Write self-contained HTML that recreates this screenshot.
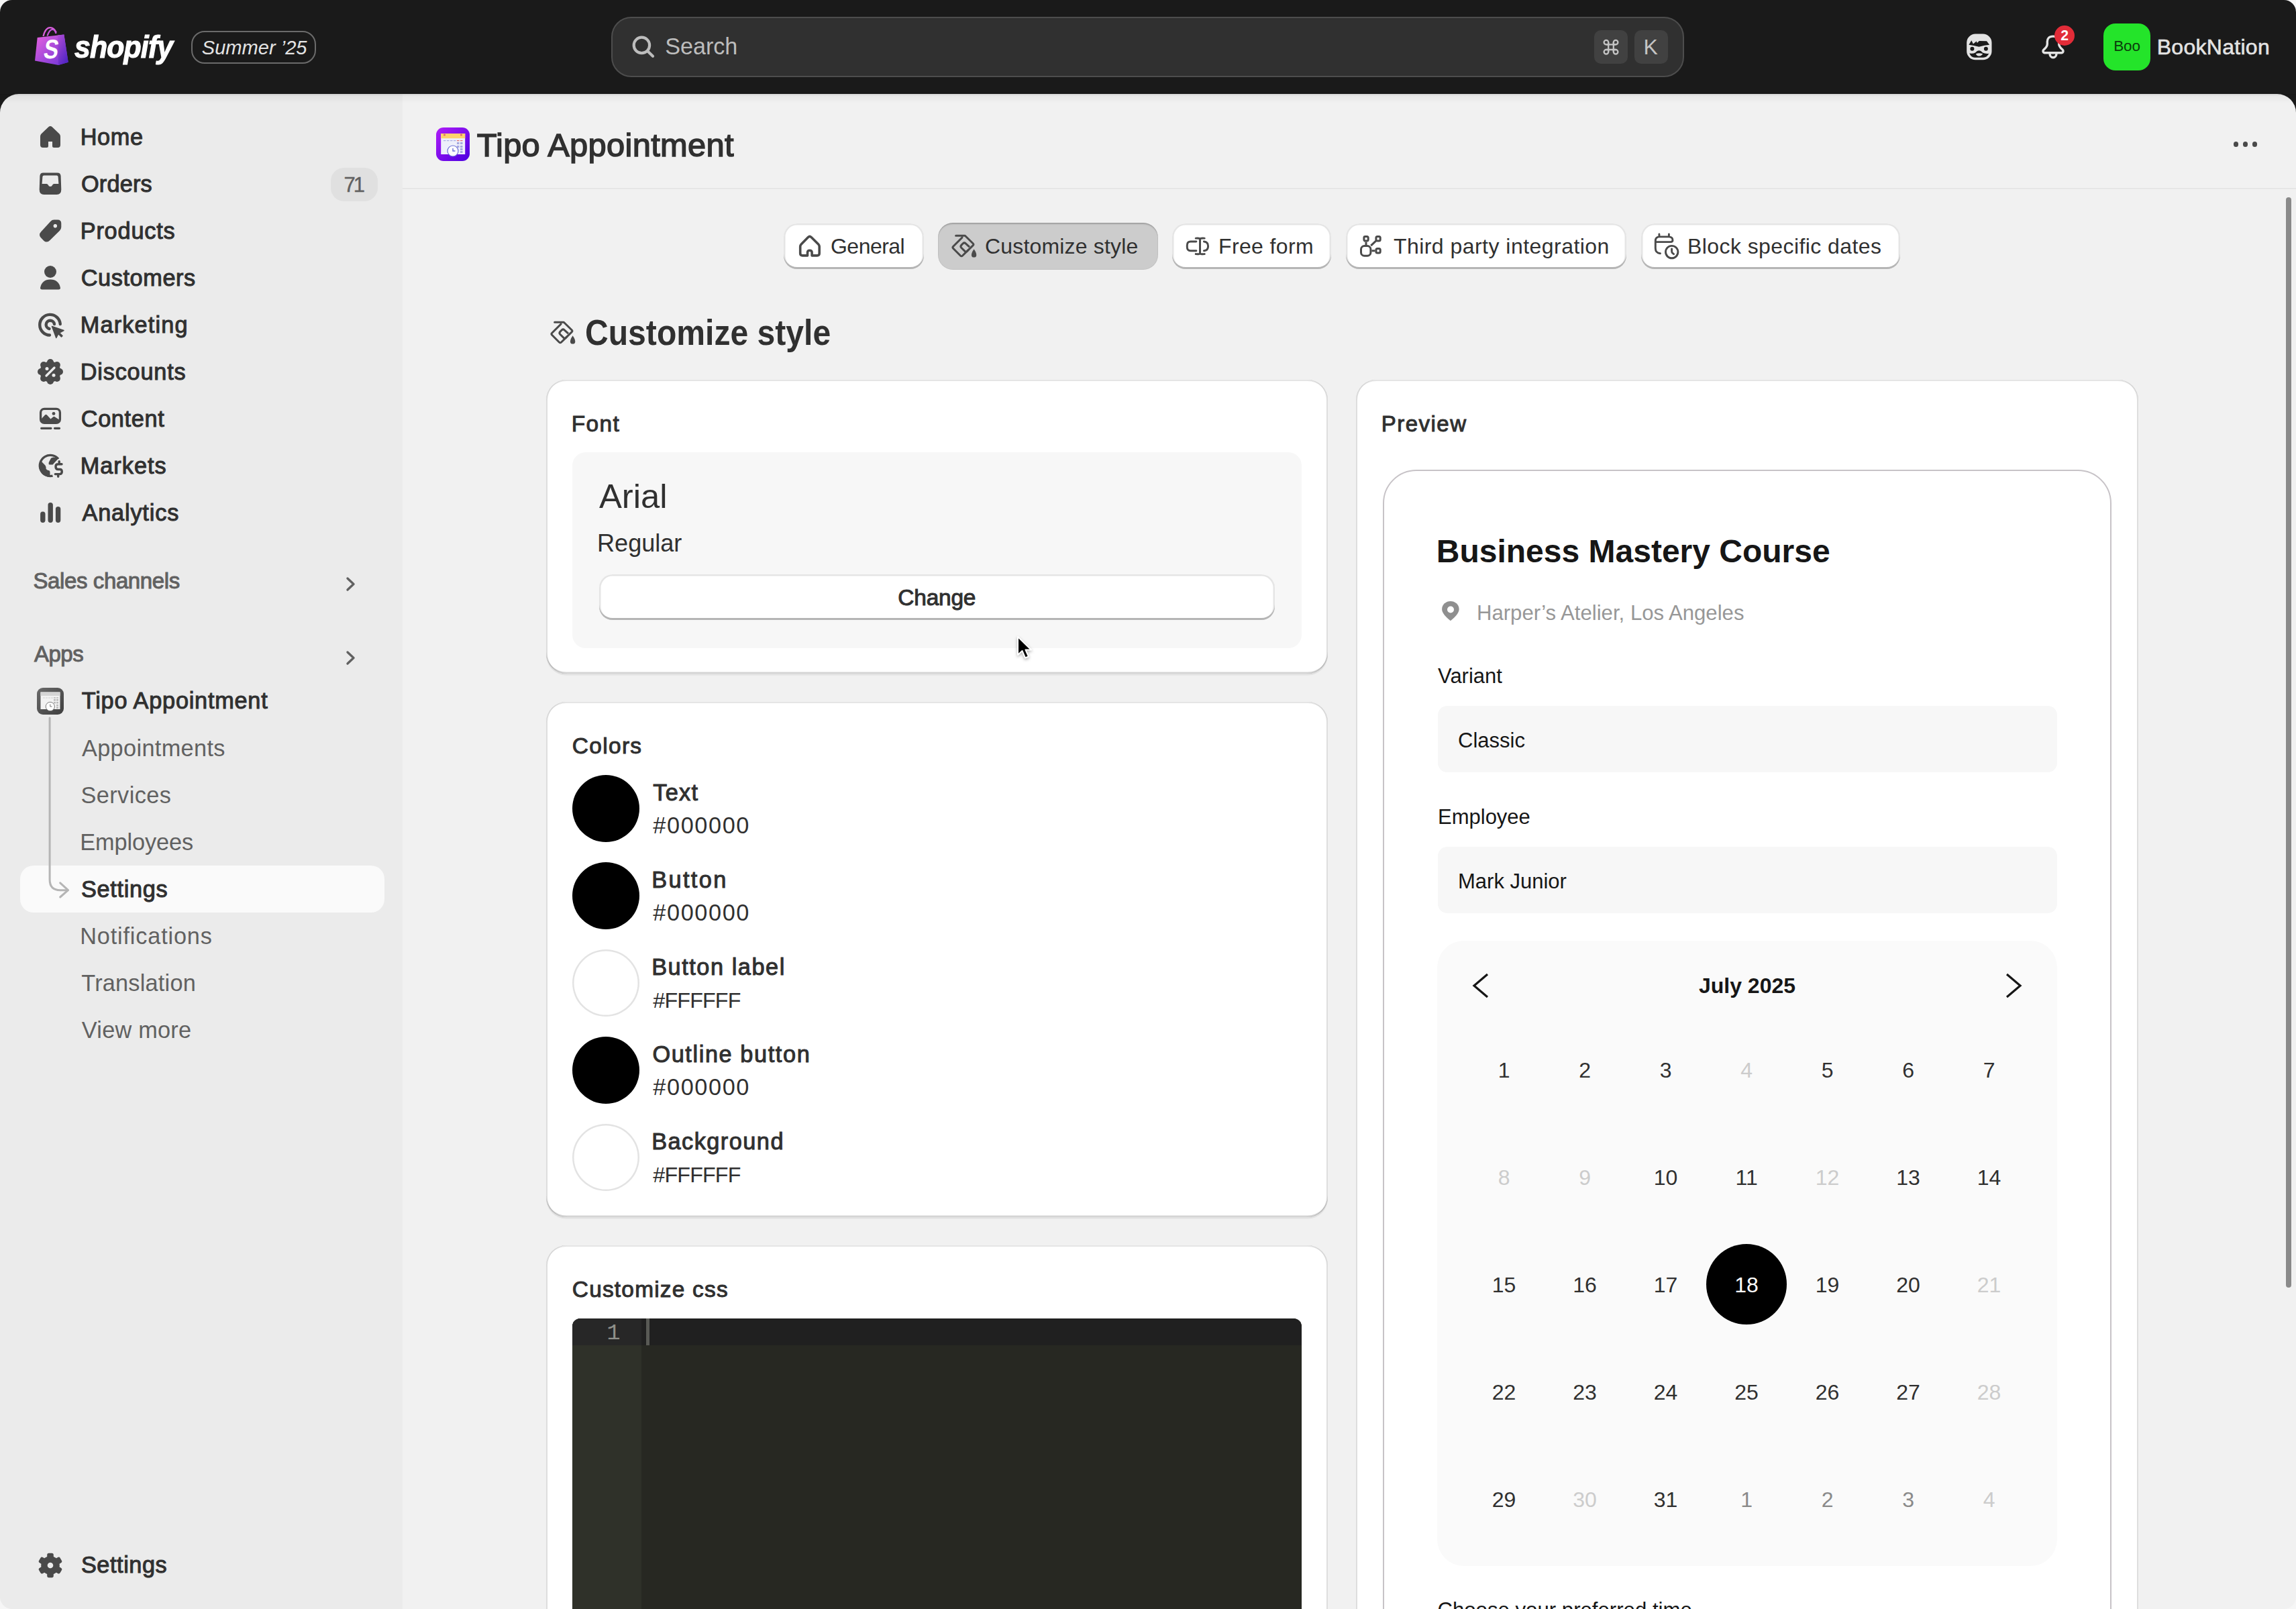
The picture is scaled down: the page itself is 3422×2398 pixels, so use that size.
<!DOCTYPE html>
<html><head><meta charset="utf-8">
<style>
*{box-sizing:border-box;margin:0;padding:0}
html,body{width:3422px;height:2398px;overflow:hidden;background:#f6f6f6}
body{font-family:"Liberation Sans",sans-serif;color:#303030;position:relative}
.abs{position:absolute}
#win{position:absolute;left:0;top:0;width:3422px;height:2398px;border-radius:18px;overflow:hidden;background:transparent}
#top{position:absolute;left:0;top:0;width:3422px;height:220px;background:#1a1a1a}
#side{position:absolute;left:0;top:140px;width:600px;height:2258px;background:#ebebeb;border-top-left-radius:28px}
#main{position:absolute;left:600px;top:140px;width:2822px;height:2258px;background:#f1f1f1;border-top-right-radius:28px}
.t{position:absolute;white-space:nowrap;line-height:1}
</style></head>
<body>
<div id="win">
<div id="top"></div>
<div id="side"></div>
<div id="main"></div>
<div style="position:absolute;left:0;top:140px;width:3422px;height:16px;background:linear-gradient(rgba(0,0,0,.12),rgba(0,0,0,.04) 3px,rgba(0,0,0,0) 14px)"></div>
<svg class="abs" style="left:48px;top:38px;" width="60" height="62" viewBox="0 0 60 62">
<defs><linearGradient id="bagg" x1="0" y1="0" x2="1" y2="1"><stop offset="0" stop-color="#e862df"/><stop offset="1" stop-color="#6a33d6"/></linearGradient>
<linearGradient id="bagr" x1="0" y1="0" x2="0.6" y2="1"><stop offset="0" stop-color="#b24ed6"/><stop offset="1" stop-color="#5526c4"/></linearGradient></defs>
<path d="M16.5 16 C18.5 8 22.5 3.2 26.8 3.2 C31 3.2 34 6.5 35.9 10.5" fill="none" stroke="#d75fd9" stroke-width="2.3"/>
<path d="M22.5 15.5 C24.5 9.5 27.5 5.8 30.3 5.8 C32.8 5.8 34.5 8.5 35.5 12" fill="none" stroke="#c455d8" stroke-width="2.2"/>
<path d="M7.7 18.1 L47.4 13.4 L53.7 54.7 L39 58.9 L4 52.6 Z" fill="url(#bagg)"/>
<path d="M38 14.6 L47.4 13.4 L53.7 54.7 L39 58.9 Z" fill="url(#bagr)"/>
<text x="0" y="0" font-family="Liberation Sans" font-weight="bold" font-size="40" fill="#fff" transform="translate(15.5 48.5) skewX(-9) scale(0.82 1)">S</text>
</svg>
<div class="t " style="left:111.49px;top:47.46px;font-size:46px;font-weight:700;color:#ffffff;font-style:italic;transform-origin:0 0;transform:scaleX(0.93);letter-spacing:-0.9px;-webkit-text-stroke:1.2px #fff;">shopify</div>
<div class="abs" style="left:285px;top:46px;width:186px;height:49px;border:2.5px solid #6b6b6b;border-radius:20px;"></div>
<div class="t " style="left:300.79px;top:56.78px;font-size:29.08px;font-weight:400;color:#e3e3e3;font-style:italic;">Summer ’25</div>
<div class="abs" style="left:911px;top:25px;width:1599px;height:90px;background:#303030;border:2px solid #4d4d4d;border-radius:30px;"></div>
<svg class="abs" style="left:930px;top:40px;" width="60" height="60" viewBox="0 0 60 60"><circle cx="26.4" cy="27.4" r="11.7" fill="none" stroke="#bdbdbd" stroke-width="4.2"/><path d="M35 36 L43 43.8" stroke="#bdbdbd" stroke-width="4.2" stroke-linecap="round"/></svg>
<div class="t " style="left:991.13px;top:51.98px;font-size:34.16px;font-weight:400;color:#bdbdbd;letter-spacing:-0.005px;">Search</div>
<div class="abs" style="left:2376px;top:45px;width:50px;height:50px;background:#414141;border-radius:10px;"></div>
<div class="abs" style="left:2436px;top:45px;width:50px;height:50px;background:#414141;border-radius:10px;"></div>
<svg class="abs" style="left:2388px;top:57px;" width="26" height="26" viewBox="0 0 26 26"><g fill="none" stroke="#c4c4c4" stroke-width="2.3"><path d="M9.2 6.1 L9.2 20.3 M16.8 6.1 L16.8 20.3 M5.9 9.4 L20.1 9.4 M5.9 17 L20.1 17"/><path d="M9.2 9.4 L9.2 6.1 A3.3 3.3 0 1 0 5.9 9.4 Z M16.8 9.4 L16.8 6.1 A3.3 3.3 0 1 1 20.1 9.4 Z M9.2 17 L9.2 20.3 A3.3 3.3 0 1 1 5.9 17 Z M16.8 17 L16.8 20.3 A3.3 3.3 0 1 0 20.1 17 Z"/></g></svg>
<div class="t " style="left:2449.38px;top:54.23px;font-size:31.98px;font-weight:400;color:#c4c4c4;letter-spacing:-0.825px;">K</div>
<svg class="abs" style="left:2920px;top:40px;" width="60" height="60" viewBox="0 0 60 60">
<rect x="11.2" y="10.6" width="37.3" height="38.6" rx="13" fill="#e3e3e3"/>
<path d="M14.4 26.7 L18.3 20.3 L20.9 25.4 L25.7 21.4 L26.8 23.9 L29.8 20.9 L41 21.3 L45.1 26.7 Q38 27 29.5 29.8 Q22 27.5 14.4 26.7 Z" fill="#1a1a1a"/>
<circle cx="19.4" cy="32.8" r="3" fill="#1a1a1a"/><circle cx="39.9" cy="32.8" r="3" fill="#1a1a1a"/>
<path d="M15.3 39.2 Q20 40.5 24 38.5 Q27 35.3 29.6 35.3 Q32.2 35.3 35 38.5 Q39 40.5 44.3 39.8 Q41.5 45.6 36 45.8 L23 45.8 Q17.5 45.5 15.3 39.2 Z" fill="#1a1a1a"/>
<path d="M24.8 40.2 Q29.6 38.5 35.2 40.2 Q33 43.6 29.6 43.6 Q26.3 43.6 24.8 40.2 Z" fill="#e3e3e3"/>
</svg>
<svg class="abs" style="left:3035px;top:44px;" width="50" height="50" viewBox="0 0 50 50">
<path d="M25 10.1 C19 10.1 16.3 13.5 16.3 18 L16.3 21.5 C16.3 25.5 14 27.5 11 30 C9.5 31.2 9.6 34.3 12.2 34.7 L37.8 34.7 C40.4 34.3 40.5 31.2 39 30 C36 27.5 33.7 25.5 33.7 21.5 L33.7 18 C33.7 13.5 31 10.1 25 10.1 Z" fill="none" stroke="#e3e3e3" stroke-width="3.4" stroke-linejoin="round"/>
<path d="M20 35.5 C20 39.5 22.5 41.8 25 41.8 C27.5 41.8 30 39.5 30 35.5" fill="none" stroke="#e3e3e3" stroke-width="3.4"/>
</svg>
<div class="abs" style="left:3062px;top:38px;width:30px;height:30px;background:#e22c38;border-radius:50%;"></div>
<div class="t " style="left:3071.26px;top:42.04px;font-size:21.21px;font-weight:700;color:#ffffff;">2</div>
<div class="abs" style="left:3135px;top:35px;width:70px;height:70px;background:#24e42a;border-radius:18px;"></div>
<div class="t " style="left:3150.15px;top:57.93px;font-size:22.53px;font-weight:400;color:#0b3d0c;letter-spacing:-0.144px;">Boo</div>
<div class="t " style="left:3214.68px;top:54.03px;font-size:31.98px;font-weight:400;color:#e3e3e3;letter-spacing:0.307px;-webkit-text-stroke:0.60px #e3e3e3;">BookNation</div>
<svg class="abs" style="left:50px;top:179px;" width="50" height="50" viewBox="0 0 50 50"><path d="M25 9 Q23.6 9 22.5 10 L11.5 20.5 Q10 22 10 24.5 L10 37 Q10 41 14 41 L19.5 41 Q22 41 22 38.5 L22 32 L28 32 L28 38.5 Q28 41 30.5 41 L36 41 Q40 41 40 37 L40 24.5 Q40 22 38.5 20.5 L27.5 10 Q26.4 9 25 9 Z" fill="#4a4a4a"/></svg>
<div class="t " style="left:119.71px;top:187.46px;font-size:34.3px;font-weight:400;color:#303030;letter-spacing:0.601px;-webkit-text-stroke:1.04px #303030;">Home</div>
<svg class="abs" style="left:50px;top:249px;" width="50" height="50" viewBox="0 0 50 50"><path fill-rule="evenodd" d="M14.5 8.6 L35.5 8.6 Q40 8.6 40.6 13 L41.3 33.5 Q41.3 41 34.5 41 L15.5 41 Q8.7 41 8.7 33.5 L9.4 13 Q10 8.6 14.5 8.6 Z M15.5 12.6 L34.5 12.6 Q36.4 12.6 36.6 14.5 L37.4 25 L30.5 25 Q29 25 28.3 26.5 Q27.3 29 25 29 Q22.7 29 21.7 26.5 Q21 25 19.5 25 L12.6 25 L13.4 14.5 Q13.6 12.6 15.5 12.6 Z" fill="#4a4a4a"/></svg>
<div class="t " style="left:120.91px;top:257.46px;font-size:34.3px;font-weight:400;color:#303030;letter-spacing:0.197px;-webkit-text-stroke:1.04px #303030;">Orders</div>
<svg class="abs" style="left:50px;top:319px;" width="50" height="50" viewBox="0 0 50 50"><path fill-rule="evenodd" d="M30.5 8.6 L35.8 8.6 Q41.3 8.6 41.3 14.1 L41.3 19.5 Q41.3 22.5 39 24.7 L24.5 39 Q22 41.6 19.5 41.6 Q17.2 41.6 15.5 39.9 L10.7 35 Q9 33.3 9 31 Q9 28.5 11.5 26 L25.3 11 Q27.6 8.6 30.5 8.6 Z M32.3 15.2 A2.6 2.6 0 1 0 32.31 15.2 Z" fill="#4a4a4a"/><circle cx="32.3" cy="17.7" r="2.6" fill="#ebebeb"/></svg>
<div class="t " style="left:119.71px;top:327.46px;font-size:34.3px;font-weight:400;color:#303030;letter-spacing:0.809px;-webkit-text-stroke:1.04px #303030;">Products</div>
<svg class="abs" style="left:50px;top:389px;" width="50" height="50" viewBox="0 0 50 50"><circle cx="25" cy="16" r="9" fill="#4a4a4a"/><path d="M10 40 Q10 42.5 12.8 42.5 L37.2 42.5 Q40 42.5 40 40 Q37.5 27.4 25 27.4 Q12.5 27.4 10 40 Z" fill="#4a4a4a"/></svg>
<div class="t " style="left:120.77px;top:397.46px;font-size:34.3px;font-weight:400;color:#303030;letter-spacing:0.576px;-webkit-text-stroke:1.04px #303030;">Customers</div>
<svg class="abs" style="left:50px;top:459px;" width="50" height="50" viewBox="0 0 50 50"><path d="M24 40.5 A15.3 15.3 0 1 1 39.8 24" fill="none" stroke="#4a4a4a" stroke-width="4.4" stroke-linecap="round"/><path d="M23.5 31 A6.2 6.2 0 1 1 31 24" fill="none" stroke="#4a4a4a" stroke-width="4.4" stroke-linecap="round"/><path d="M27.5 27.5 L45 33.5 L38.5 37 L43 41.5 L41.5 43 L37 38.5 L33.8 44.5 Z" fill="#4a4a4a" stroke="#4a4a4a" stroke-width="1.5" stroke-linejoin="round"/></svg>
<div class="t " style="left:119.71px;top:467.46px;font-size:34.3px;font-weight:400;color:#303030;letter-spacing:1.170px;-webkit-text-stroke:1.04px #303030;">Marketing</div>
<svg class="abs" style="left:50px;top:529px;" width="50" height="50" viewBox="0 0 50 50"><circle cx="25" cy="25" r="15.5" fill="#4a4a4a"/><circle cx="25.00" cy="11.00" r="5" fill="#4a4a4a"/><circle cx="34.90" cy="15.10" r="5" fill="#4a4a4a"/><circle cx="39.00" cy="25.00" r="5" fill="#4a4a4a"/><circle cx="34.90" cy="34.90" r="5" fill="#4a4a4a"/><circle cx="25.00" cy="39.00" r="5" fill="#4a4a4a"/><circle cx="15.10" cy="34.90" r="5" fill="#4a4a4a"/><circle cx="11.00" cy="25.00" r="5" fill="#4a4a4a"/><circle cx="15.10" cy="15.10" r="5" fill="#4a4a4a"/><path d="M19 31 L31 19" stroke="#ebebeb" stroke-width="3.3" stroke-linecap="round"/><circle cx="20" cy="20.4" r="2.5" fill="#ebebeb"/><circle cx="30" cy="30.2" r="2.5" fill="#ebebeb"/></svg>
<div class="t " style="left:119.71px;top:537.46px;font-size:34.3px;font-weight:400;color:#303030;letter-spacing:0.800px;-webkit-text-stroke:1.04px #303030;">Discounts</div>
<svg class="abs" style="left:50px;top:599px;" width="50" height="50" viewBox="0 0 50 50"><rect x="10.6" y="10.4" width="28.8" height="21" rx="5.5" fill="none" stroke="#4a4a4a" stroke-width="3.3"/><path d="M11 28 L11 26 L17 19.5 Q18.5 18 20 19.5 L25.5 25.5 L29 22.5 Q30.5 21 32 22.5 L39 27 L39 28 Q39 31 36 31 L14 31 Q11 31 11 28 Z" fill="#4a4a4a"/><circle cx="30" cy="17.4" r="2.4" fill="#4a4a4a"/><path d="M11.7 39.3 L26 39.3 M31.5 39.3 L38.5 39.3" stroke="#4a4a4a" stroke-width="3.3" stroke-linecap="round"/></svg>
<div class="t " style="left:120.77px;top:607.46px;font-size:34.3px;font-weight:400;color:#303030;letter-spacing:0.633px;-webkit-text-stroke:1.04px #303030;">Content</div>
<svg class="abs" style="left:50px;top:669px;" width="50" height="50" viewBox="0 0 50 50"><path d="M28.5 40.2 A15.6 15.6 0 1 1 36.95 14.97" fill="none" stroke="#4a4a4a" stroke-width="3.4"/><path d="M12 19 L17.4 24.5 Q18.6 26 18.6 29.5 Q19.5 31.8 23.3 32.3 Q24.5 33 24.5 35 L24.5 38.8 L28.8 41.5 A17 17 0 0 1 8.5 21 Z" fill="#4a4a4a"/><path d="M22.7 20.2 L26.1 13.7 L29.5 12.4 L37.9 14 L33.6 18 L28.6 23.6 L23.9 23.6 Q22 23 22.7 20.2 Z" fill="#4a4a4a"/><path d="M42 22.7 L36.7 22.7 Q33 22.7 33 26.4 Q33 30.5 36.7 30.5 L39.2 30.5 Q42.3 30.5 42.3 34 Q42.3 37.6 38.5 37.6 L32.3 37.6 M38.2 18.6 L38.2 22.7 M36.7 41.3 L36.7 37.6" fill="none" stroke="#ebebeb" stroke-width="7" stroke-linecap="round" stroke-linejoin="round"/><path d="M42 22.7 L36.7 22.7 Q33 22.7 33 26.4 Q33 30.5 36.7 30.5 L39.2 30.5 Q42.3 30.5 42.3 34 Q42.3 37.6 38.5 37.6 L32.3 37.6 M38.2 18.6 L38.2 22.7 M36.7 41.3 L36.7 37.6" fill="none" stroke="#4a4a4a" stroke-width="3.4" stroke-linecap="round" stroke-linejoin="round"/></svg>
<div class="t " style="left:119.71px;top:677.46px;font-size:34.3px;font-weight:400;color:#303030;letter-spacing:1.006px;-webkit-text-stroke:1.04px #303030;">Markets</div>
<svg class="abs" style="left:50px;top:739px;" width="50" height="50" viewBox="0 0 50 50"><path d="M13.8 27.3 L13.8 36.3 M25.2 13.6 L25.2 36.3 M36.6 19.6 L36.6 36.3" stroke="#4a4a4a" stroke-width="7.4" stroke-linecap="round"/></svg>
<div class="t " style="left:122.45px;top:747.46px;font-size:34.3px;font-weight:400;color:#303030;letter-spacing:0.829px;-webkit-text-stroke:1.04px #303030;">Analytics</div>
<div class="abs" style="left:493px;top:250px;width:70px;height:50px;background:#e0e0e0;border-radius:20px;"></div>
<div class="t " style="left:512.62px;top:259.76px;font-size:31px;font-weight:400;color:#616161;letter-spacing:-3px;-webkit-text-stroke:0.4px #616161;">71</div>
<div class="t " style="left:49.48px;top:848.77px;font-size:32.99px;font-weight:400;color:#616161;letter-spacing:-0.387px;-webkit-text-stroke:1.00px #616161;">Sales channels</div>
<div class="t " style="left:50.93px;top:958.07px;font-size:32.99px;font-weight:400;color:#616161;letter-spacing:-0.477px;-webkit-text-stroke:1.00px #616161;">Apps</div>
<svg class="abs" style="left:508px;top:850px;" width="30" height="40" viewBox="0 0 30 40"><path d="M10 12 L19 20.5 L10 29" fill="none" stroke="#616161" stroke-width="3.4" stroke-linecap="round" stroke-linejoin="round"/></svg>
<svg class="abs" style="left:508px;top:960px;" width="30" height="40" viewBox="0 0 30 40"><path d="M10 12 L19 20.5 L10 29" fill="none" stroke="#616161" stroke-width="3.4" stroke-linecap="round" stroke-linejoin="round"/></svg>
<svg class="abs" style="left:55px;top:1025px;" width="40" height="40" viewBox="0 0 40 40"><defs><linearGradient id="gg" x1="0" y1="0" x2="1" y2="1"><stop offset="0" stop-color="#6a6a6a"/><stop offset="1" stop-color="#3e3e3e"/></linearGradient></defs>
<rect x="0" y="0" width="40" height="40" rx="9" fill="url(#gg)"/>
<rect x="5.5" y="6.5" width="29" height="25.5" fill="#f2f2f2"/><rect x="5.5" y="6.5" width="29" height="5.5" fill="#d5d5d5"/>
<g fill="#cfcfcf"><rect x="9" y="14.5" width="3" height="1"/><rect x="13" y="14.5" width="3" height="1"/><rect x="17" y="14.5" width="3" height="1"/><rect x="21" y="14.5" width="3" height="1"/><rect x="25" y="14.5" width="3" height="1" fill="#999"/><rect x="29" y="14.5" width="3" height="1" fill="#999"/>
<rect x="25" y="17" width="3" height="2.5" fill="#bbb"/><rect x="29" y="17" width="3" height="2.5" fill="#bbb"/><rect x="25" y="21" width="3" height="2.5" fill="#bbb"/><rect x="29" y="21" width="3" height="2.5" fill="#bbb"/><rect x="29" y="25" width="3" height="2.5" fill="#bbb"/><rect x="29" y="28.5" width="3" height="2.5" fill="#bbb"/></g>
<circle cx="19.8" cy="28" r="6.6" fill="#fff" stroke="#5a5a5a" stroke-width="0.8"/><path d="M19.8 24.5 L19.8 28 L22.5 28" stroke="#777" stroke-width="1" fill="none"/>
</svg>
<div class="t " style="left:121.77px;top:1026.96px;font-size:34.3px;font-weight:400;color:#303030;letter-spacing:0.751px;-webkit-text-stroke:1.04px #303030;">Tipo Appointment</div>
<div class="abs" style="left:30px;top:1290px;width:543px;height:70px;background:#fafafa;border-radius:20px;"></div>
<svg class="abs" style="left:60px;top:1060px;" width="50" height="290" viewBox="0 0 50 290"><path d="M14.1 10 L14.1 251 Q14.1 266.7 29.8 266.7 L41 266.7" fill="none" stroke="#b5b5b5" stroke-width="3" stroke-linecap="round"/><path d="M29.7 255.8 L41.5 266.7 L29.7 277" fill="none" stroke="#b5b5b5" stroke-width="3" stroke-linecap="round" stroke-linejoin="round"/></svg>
<div class="t " style="left:121.93px;top:1097.96px;font-size:34.3px;font-weight:400;color:#616161;letter-spacing:0.351px;">Appointments</div>
<div class="t " style="left:120.42px;top:1167.96px;font-size:34.3px;font-weight:400;color:#616161;letter-spacing:0.425px;">Services</div>
<div class="t " style="left:119.19px;top:1237.96px;font-size:34.3px;font-weight:400;color:#616161;letter-spacing:-0.079px;">Employees</div>
<div class="t " style="left:120.94px;top:1307.96px;font-size:34.3px;font-weight:400;color:#303030;letter-spacing:0.692px;-webkit-text-stroke:1.04px #303030;">Settings</div>
<div class="t " style="left:119.19px;top:1377.96px;font-size:34.3px;font-weight:400;color:#616161;letter-spacing:0.826px;">Notifications</div>
<div class="t " style="left:121.25px;top:1447.96px;font-size:34.3px;font-weight:400;color:#616161;letter-spacing:0.217px;">Translation</div>
<div class="t " style="left:121.83px;top:1517.96px;font-size:34.3px;font-weight:400;color:#616161;letter-spacing:0.225px;">View more</div>
<svg class="abs" style="left:50px;top:2308px;" width="50" height="50" viewBox="0 0 50 50"><circle cx="25" cy="25" r="13.8" fill="#4a4a4a"/><rect x="20.2" y="6.8" width="9.6" height="12" rx="2.6" fill="#4a4a4a" transform="rotate(0 25 25)"/><rect x="20.2" y="6.8" width="9.6" height="12" rx="2.6" fill="#4a4a4a" transform="rotate(60 25 25)"/><rect x="20.2" y="6.8" width="9.6" height="12" rx="2.6" fill="#4a4a4a" transform="rotate(120 25 25)"/><rect x="20.2" y="6.8" width="9.6" height="12" rx="2.6" fill="#4a4a4a" transform="rotate(180 25 25)"/><rect x="20.2" y="6.8" width="9.6" height="12" rx="2.6" fill="#4a4a4a" transform="rotate(240 25 25)"/><rect x="20.2" y="6.8" width="9.6" height="12" rx="2.6" fill="#4a4a4a" transform="rotate(300 25 25)"/><circle cx="25" cy="25" r="4.3" fill="#ebebeb"/></svg>
<div class="t " style="left:120.94px;top:2314.96px;font-size:34.3px;font-weight:400;color:#303030;letter-spacing:0.550px;-webkit-text-stroke:1.04px #303030;">Settings</div>
<svg class="abs" style="left:650px;top:190px;" width="50" height="50" viewBox="0 0 50 50"><defs><linearGradient id="pg" x1="0" y1="0" x2="1" y2="1"><stop offset="0" stop-color="#b01cf8"/><stop offset="1" stop-color="#4a00df"/></linearGradient></defs>
<rect x="0" y="0" width="50" height="50" rx="11" fill="url(#pg)"/>
<rect x="7.2" y="9" width="36" height="31" fill="#eef0fb"/><rect x="7.2" y="9" width="36" height="7.2" fill="#fdd36d"/>
<g fill="#a9aee6"><rect x="11" y="19" width="3.5" height="1.2"/><rect x="16" y="19" width="3.5" height="1.2"/><rect x="21" y="19" width="3.5" height="1.2"/><rect x="26" y="19" width="3.5" height="1.2"/></g>
<g fill="#e06a6a"><rect x="31" y="19" width="3.5" height="1.2"/><rect x="36" y="19" width="3.5" height="1.2"/></g>
<g fill="#a5a8e0"><rect x="31" y="22" width="3.5" height="3"/><rect x="36" y="22" width="3.5" height="3"/><rect x="31" y="27" width="3.5" height="3"/><rect x="36" y="27" width="3.5" height="3"/><rect x="36" y="31" width="3.5" height="3"/><rect x="36" y="35" width="3.5" height="3"/></g>
<circle cx="25" cy="35" r="8" fill="#fff" stroke="#6a6fd6" stroke-width="1.2"/><path d="M25 31 L25 35 L28.5 35" stroke="#6a6fd6" stroke-width="1.4" fill="none"/>
<circle cx="12.5" cy="11" r="1.6" fill="#e06a6a"/><circle cx="37.5" cy="11" r="1.6" fill="#e06a6a"/>
</svg>
<div class="t " style="left:710.67px;top:191.65px;font-size:48.84px;font-weight:400;color:#303030;letter-spacing:0.308px;-webkit-text-stroke:1.48px #303030;">Tipo Appointment</div>
<div class="abs" style="left:3328.9px;top:211.4px;width:7.2px;height:7.2px;background:#4a4a4a;border-radius:50%;"></div>
<div class="abs" style="left:3342.9px;top:211.4px;width:7.2px;height:7.2px;background:#4a4a4a;border-radius:50%;"></div>
<div class="abs" style="left:3356.9px;top:211.4px;width:7.2px;height:7.2px;background:#4a4a4a;border-radius:50%;"></div>
<div class="abs" style="left:600px;top:280px;width:2822px;height:2px;background:#e6e6e6;"></div>
<div class="abs" style="left:1168px;top:333px;width:209px;height:68px;background:#ffffff;border-radius:20px;box-shadow:inset 0 -3px 0 0 #b5b5b5, inset 0 0 0 2.5px rgba(0,0,0,.1), inset 0 1.5px 0 2.5px #fff;"></div>
<svg class="abs" style="left:1182px;top:342px;" width="50" height="50" viewBox="0 0 50 50"><path d="M21.5 38.9 L14 38.9 Q10.7 38.9 10.7 35.6 L10.7 25.5 Q10.7 23.5 12.2 22 L22.5 11.5 Q24.8 9.4 27.1 11.5 L37.7 22 Q39.2 23.5 39.2 25.5 L39.2 35.6 Q39.2 38.9 36 38.9 L28.1 38.9 L28.1 34.5 Q28.1 31.3 24.8 31.3 Q21.5 31.3 21.5 34.5 Z" fill="none" stroke="#4a4a4a" stroke-width="3.6" stroke-linejoin="round"/></svg>
<div class="t " style="left:1238.00px;top:351.33px;font-size:31.98px;font-weight:400;color:#303030;letter-spacing:-0.502px;">General</div>
<div class="abs" style="left:1398px;top:332px;width:328px;height:70px;background:#cccccc;border-radius:22px;box-shadow:inset 0 3px 2px -1px rgba(0,0,0,.2), inset 0 0 0 1px rgba(0,0,0,.05);"></div>
<svg class="abs" style="left:1410px;top:342px;" width="50" height="50" viewBox="0 0 50 50"><path d="M14.6 9.2 L28.3 9.2 L40.3 21 Q41.5 22.3 40.3 23.6 L24.6 39 Q23 40.5 21.4 39 L10.7 28.2 Q9.2 26.7 10.7 25.2 L24 12" fill="none" stroke="#4a4a4a" stroke-width="3" stroke-linecap="round" stroke-linejoin="round"/><path d="M35 26.2 L29.2 20.8 Q27.2 19 25.3 20.8 L22.8 23.4 Q21 25.3 22.8 27.2 L28.3 32.6 Q29.7 34 31.1 32.6 L33.4 30.3" fill="none" stroke="#4a4a4a" stroke-width="3" stroke-linejoin="round"/><path d="M41.6 29.2 Q45.3 34.5 45.3 37.9 A3.7 3.7 0 0 1 37.9 37.9 Q37.9 34.5 41.6 29.2 Z" fill="#4a4a4a"/></svg>
<div class="t " style="left:1467.97px;top:351.33px;font-size:31.98px;font-weight:400;color:#303030;letter-spacing:0.197px;">Customize style</div>
<div class="abs" style="left:1747px;top:333px;width:237px;height:68px;background:#ffffff;border-radius:20px;box-shadow:inset 0 -3px 0 0 #b5b5b5, inset 0 0 0 2.5px rgba(0,0,0,.1), inset 0 1.5px 0 2.5px #fff;"></div>
<svg class="abs" style="left:1759px;top:342px;" width="50" height="50" viewBox="0 0 50 50"><path d="M23.9 18 L15.5 18 Q10.3 18 10.3 23.5 L10.3 26.2 Q10.3 31.7 15.5 31.7 L23.9 31.7 M35.4 18 Q41.6 18.5 41.6 24.9 Q41.6 31.2 35.4 31.7 M29.5 13.5 L29.5 36.2 M23.2 13.1 Q29.5 12.6 29.5 14.5 Q29.5 12.6 36.2 13.1 M23.2 36.6 Q29.5 37.2 29.5 35.3 Q29.5 37.2 36.2 36.6" fill="none" stroke="#4a4a4a" stroke-width="2.95" stroke-linecap="round"/></svg>
<div class="t " style="left:1815.98px;top:351.33px;font-size:31.98px;font-weight:400;color:#303030;letter-spacing:0.391px;">Free form</div>
<div class="abs" style="left:2006px;top:333px;width:418px;height:68px;background:#ffffff;border-radius:20px;box-shadow:inset 0 -3px 0 0 #b5b5b5, inset 0 0 0 2.5px rgba(0,0,0,.1), inset 0 1.5px 0 2.5px #fff;"></div>
<svg class="abs" style="left:2018px;top:342px;" width="50" height="50" viewBox="0 0 50 50"><g fill="none" stroke="#4a4a4a" stroke-width="3"><rect x="14.9" y="10.5" width="6.3" height="6.6" rx="2"/><rect x="32.9" y="10.5" width="6.3" height="6.6" rx="2"/><rect x="32.9" y="28.5" width="6.3" height="6.6" rx="2"/><rect x="10.5" y="24.5" width="14.4" height="14.7" rx="5"/><path d="M18 18.6 L18 23 M25.2 24.2 L32.6 17.1 M26.4 31.7 L31.4 31.7"/></g></svg>
<div class="t " style="left:2076.90px;top:351.33px;font-size:31.98px;font-weight:400;color:#303030;letter-spacing:0.478px;">Third party integration</div>
<div class="abs" style="left:2446px;top:333px;width:386px;height:68px;background:#ffffff;border-radius:20px;box-shadow:inset 0 -3px 0 0 #b5b5b5, inset 0 0 0 2.5px rgba(0,0,0,.1), inset 0 1.5px 0 2.5px #fff;"></div>
<svg class="abs" style="left:2458px;top:342px;" width="50" height="50" viewBox="0 0 50 50"><path d="M16.5 35.7 Q9.3 35 9.3 28 L9.3 17 Q9.3 10.9 15.5 10.9 L29 10.9 Q35 10.9 35 16 Q35 18.6 32 18.6 L9.3 18.6 M14.9 7 L14.9 10.5 M29.4 7 L29.4 10.5" fill="none" stroke="#4a4a4a" stroke-width="2.9" stroke-linecap="round"/><circle cx="33.7" cy="33.6" r="9.2" fill="none" stroke="#4a4a4a" stroke-width="2.9"/><path d="M33.6 29 L33.6 32.4 Q33.6 34.2 35 35.4 L36.6 36.6" fill="none" stroke="#4a4a4a" stroke-width="2.9" stroke-linecap="round"/></svg>
<div class="t " style="left:2514.98px;top:351.33px;font-size:31.98px;font-weight:400;color:#303030;letter-spacing:0.438px;">Block specific dates</div>
<svg class="abs" style="left:811.5px;top:470.6px;" width="50" height="50" viewBox="0 0 50 50"><path d="M14.6 9.2 L28.3 9.2 L40.3 21 Q41.5 22.3 40.3 23.6 L24.6 39 Q23 40.5 21.4 39 L10.7 28.2 Q9.2 26.7 10.7 25.2 L24 12" fill="none" stroke="#4a4a4a" stroke-width="3" stroke-linecap="round" stroke-linejoin="round"/><path d="M35 26.2 L29.2 20.8 Q27.2 19 25.3 20.8 L22.8 23.4 Q21 25.3 22.8 27.2 L28.3 32.6 Q29.7 34 31.1 32.6 L33.4 30.3" fill="none" stroke="#4a4a4a" stroke-width="3" stroke-linejoin="round"/><path d="M41.6 29.2 Q45.3 34.5 45.3 37.9 A3.7 3.7 0 0 1 37.9 37.9 Q37.9 34.5 41.6 29.2 Z" fill="#4a4a4a"/></svg>
<div class="t " style="left:872.03px;top:472.98px;font-size:48.1px;font-weight:700;color:#303030;transform-origin:0 84.66%;transform:scaleY(1.1);">Customize style</div>
<div class="abs" style="left:814px;top:566px;width:1165px;height:438px;background:#fff;border-radius:30px;box-shadow:0 2.5px 0 0 rgba(26,26,26,.07), inset 0 2px 0 0 rgba(204,204,204,.5), inset 0 -2.5px 0 0 rgba(0,0,0,.17), inset -2px 0 0 0 rgba(0,0,0,.13), inset 2px 0 0 0 rgba(0,0,0,.13);"></div>
<div class="t " style="left:851.77px;top:614.70px;font-size:33.43px;font-weight:400;color:#303030;letter-spacing:1.356px;-webkit-text-stroke:1.01px #303030;">Font</div>
<div class="abs" style="left:853px;top:674px;width:1087px;height:292px;background:#f7f7f7;border-radius:20px;"></div>
<div class="t " style="left:892.90px;top:715.04px;font-size:50.75px;font-weight:400;color:#303030;">Arial</div>
<div class="t " style="left:890.04px;top:792.45px;font-size:36.09px;font-weight:400;color:#303030;">Regular</div>
<div class="abs" style="left:893px;top:856px;width:1007px;height:68px;background:#ffffff;border-radius:20px;box-shadow:inset 0 -3px 0 0 #b5b5b5, inset 0 0 0 2.5px rgba(0,0,0,.1), inset 0 1.5px 0 2.5px #fff;"></div>
<div class="t " style="left:1338.30px;top:873.70px;font-size:33.43px;font-weight:400;color:#303030;letter-spacing:-0.188px;-webkit-text-stroke:1.01px #303030;">Change</div>
<div class="abs" style="left:814px;top:1046px;width:1165px;height:768px;background:#fff;border-radius:30px;box-shadow:0 2.5px 0 0 rgba(26,26,26,.07), inset 0 2px 0 0 rgba(204,204,204,.5), inset 0 -2.5px 0 0 rgba(0,0,0,.17), inset -2px 0 0 0 rgba(0,0,0,.13), inset 2px 0 0 0 rgba(0,0,0,.13);"></div>
<div class="t " style="left:852.80px;top:1094.70px;font-size:33.43px;font-weight:400;color:#303030;letter-spacing:1.337px;-webkit-text-stroke:1.01px #303030;">Colors</div>
<div class="abs" style="left:853px;top:1155px;width:100px;height:100px;background:#000;border-radius:50%;"></div>
<div class="t " style="left:973.27px;top:1163.96px;font-size:34.3px;font-weight:400;color:#303030;letter-spacing:1.316px;-webkit-text-stroke:1.04px #303030;">Text</div>
<div class="t " style="left:973.36px;top:1212.96px;font-size:34.3px;font-weight:400;color:#303030;letter-spacing:1.591px;">#000000</div>
<div class="abs" style="left:853px;top:1285px;width:100px;height:100px;background:#000;border-radius:50%;"></div>
<div class="t " style="left:971.21px;top:1293.96px;font-size:34.3px;font-weight:400;color:#303030;letter-spacing:2.368px;-webkit-text-stroke:1.04px #303030;">Button</div>
<div class="t " style="left:973.36px;top:1342.96px;font-size:34.3px;font-weight:400;color:#303030;letter-spacing:1.591px;">#000000</div>
<div class="abs" style="left:853px;top:1415px;width:100px;height:100px;background:#fff;border-radius:50%;box-shadow:inset 0 0 0 2.5px #e3e3e3;"></div>
<div class="t " style="left:971.21px;top:1423.96px;font-size:34.3px;font-weight:400;color:#303030;letter-spacing:1.536px;-webkit-text-stroke:1.04px #303030;">Button label</div>
<div class="t " style="left:973.37px;top:1474.68px;font-size:32.27px;font-weight:400;color:#303030;letter-spacing:-0.865px;">#FFFFFF</div>
<div class="abs" style="left:853px;top:1545px;width:100px;height:100px;background:#000;border-radius:50%;"></div>
<div class="t " style="left:972.41px;top:1553.96px;font-size:34.3px;font-weight:400;color:#303030;letter-spacing:1.596px;-webkit-text-stroke:1.04px #303030;">Outline button</div>
<div class="t " style="left:973.36px;top:1602.96px;font-size:34.3px;font-weight:400;color:#303030;letter-spacing:1.591px;">#000000</div>
<div class="abs" style="left:853px;top:1675px;width:100px;height:100px;background:#fff;border-radius:50%;box-shadow:inset 0 0 0 2.5px #e3e3e3;"></div>
<div class="t " style="left:971.21px;top:1683.96px;font-size:34.3px;font-weight:400;color:#303030;letter-spacing:1.468px;-webkit-text-stroke:1.04px #303030;">Background</div>
<div class="t " style="left:973.37px;top:1734.68px;font-size:32.27px;font-weight:400;color:#303030;letter-spacing:-0.865px;">#FFFFFF</div>
<div class="abs" style="left:814px;top:1856px;width:1165px;height:700px;background:#fff;border-radius:30px;box-shadow:0 2.5px 0 0 rgba(26,26,26,.07), inset 0 2px 0 0 rgba(204,204,204,.5), inset 0 -2.5px 0 0 rgba(0,0,0,.17), inset -2px 0 0 0 rgba(0,0,0,.13), inset 2px 0 0 0 rgba(0,0,0,.13);"></div>
<div class="t " style="left:852.80px;top:1904.70px;font-size:33.43px;font-weight:400;color:#303030;letter-spacing:1.214px;-webkit-text-stroke:1.01px #303030;">Customize css</div>
<div class="abs" style="left:853px;top:1965px;width:1087px;height:600px;background:#272822;border-radius:12px 12px 0 0;overflow:hidden;"></div>
<div class="abs" style="left:853px;top:2005px;width:103px;height:560px;background:#2f3129;"></div>
<div class="abs" style="left:853px;top:1965px;width:1087px;height:40px;background:#202020;border-radius:12px 12px 0 0;"></div>
<div class="abs" style="left:853px;top:1965px;width:103px;height:40px;background:#272727;border-radius:12px 0 0 0;"></div>
<div class="t " style="left:914.5px;top:1970.22px;font-size:34px;font-weight:400;color:#8f908a;transform:translateX(-50%);font-family:'Liberation Mono',monospace;">1</div>
<div class="abs" style="left:963px;top:1965px;width:5px;height:40px;background:#595a55;"></div>
<div class="abs" style="left:2021px;top:566px;width:1166px;height:1900px;background:#fff;border-radius:30px;box-shadow:0 2.5px 0 0 rgba(26,26,26,.07), inset 0 2px 0 0 rgba(204,204,204,.5), inset 0 -2.5px 0 0 rgba(0,0,0,.17), inset -2px 0 0 0 rgba(0,0,0,.13), inset 2px 0 0 0 rgba(0,0,0,.13);"></div>
<div class="t " style="left:2058.79px;top:615.07px;font-size:32.99px;font-weight:400;color:#303030;letter-spacing:1.482px;-webkit-text-stroke:1.00px #303030;">Preview</div>
<div class="abs" style="left:2061px;top:700px;width:1086px;height:1800px;border:2.5px solid #c7c3c7;border-radius:50px;background:#fff;"></div>
<div class="t " style="left:2140.78px;top:798.36px;font-size:48px;font-weight:700;color:#161616;">Business Mastery Course</div>
<svg class="abs" style="left:2140px;top:893px;" width="44" height="40" viewBox="0 0 44 40"><path d="M22 3.5 C14.5 3.5 7.5 9 7.5 17 C7.5 26 22 36.5 22 36.5 C22 36.5 36.5 26 36.5 17 C36.5 9 29.5 3.5 22 3.5 Z" fill="#8f8f8f" transform="translate(2.5,0) scale(0.88)"/><circle cx="22" cy="15.5" r="5" fill="#fff"/></svg>
<div class="t " style="left:2200.95px;top:897.64px;font-size:31.14px;font-weight:400;color:#979797;">Harper’s Atelier, Los Angeles</div>
<div class="t " style="left:2143.00px;top:992.26px;font-size:31px;font-weight:400;color:#161616;">Variant</div>
<div class="abs" style="left:2143px;top:1052px;width:923px;height:99px;background:#f7f7f7;border-radius:14px;"></div>
<div class="t " style="left:2173.00px;top:1087.76px;font-size:31px;font-weight:400;color:#161616;">Classic</div>
<div class="t " style="left:2143.00px;top:1202.46px;font-size:31px;font-weight:400;color:#161616;">Employee</div>
<div class="abs" style="left:2143px;top:1262px;width:923px;height:99px;background:#f7f7f7;border-radius:14px;"></div>
<div class="t " style="left:2173.00px;top:1297.76px;font-size:31px;font-weight:400;color:#161616;">Mark Junior</div>
<div class="abs" style="left:2142px;top:1402px;width:924px;height:932px;background:#fafafa;border-radius:40px;"></div>
<svg class="abs" style="left:2180px;top:1448px;" width="50" height="42" viewBox="0 0 50 42"><path d="M37 4 L17 21 L37 38" fill="none" stroke="#161616" stroke-width="3.2" stroke-linejoin="miter"/></svg>
<svg class="abs" style="left:2978px;top:1448px;" width="50" height="42" viewBox="0 0 50 42"><path d="M13 4 L33 21 L13 38" fill="none" stroke="#161616" stroke-width="3.2" stroke-linejoin="miter"/></svg>
<div class="t " style="left:2604px;top:1452.91px;font-size:32px;font-weight:700;color:#161616;transform:translateX(-50%);">July 2025</div>
<div class="t " style="left:2241.6px;top:1579.41px;font-size:32px;font-weight:400;color:#303030;transform:translateX(-50%);">1</div>
<div class="t " style="left:2362.1px;top:1579.41px;font-size:32px;font-weight:400;color:#303030;transform:translateX(-50%);">2</div>
<div class="t " style="left:2482.6px;top:1579.41px;font-size:32px;font-weight:400;color:#303030;transform:translateX(-50%);">3</div>
<div class="t " style="left:2603.1px;top:1579.41px;font-size:32px;font-weight:400;color:#cccccc;transform:translateX(-50%);">4</div>
<div class="t " style="left:2723.6px;top:1579.41px;font-size:32px;font-weight:400;color:#303030;transform:translateX(-50%);">5</div>
<div class="t " style="left:2844.1px;top:1579.41px;font-size:32px;font-weight:400;color:#303030;transform:translateX(-50%);">6</div>
<div class="t " style="left:2964.6px;top:1579.41px;font-size:32px;font-weight:400;color:#303030;transform:translateX(-50%);">7</div>
<div class="t " style="left:2241.6px;top:1739.41px;font-size:32px;font-weight:400;color:#cccccc;transform:translateX(-50%);">8</div>
<div class="t " style="left:2362.1px;top:1739.41px;font-size:32px;font-weight:400;color:#cccccc;transform:translateX(-50%);">9</div>
<div class="t " style="left:2482.6px;top:1739.41px;font-size:32px;font-weight:400;color:#303030;transform:translateX(-50%);">10</div>
<div class="t " style="left:2603.1px;top:1739.41px;font-size:32px;font-weight:400;color:#303030;transform:translateX(-50%);">11</div>
<div class="t " style="left:2723.6px;top:1739.41px;font-size:32px;font-weight:400;color:#cccccc;transform:translateX(-50%);">12</div>
<div class="t " style="left:2844.1px;top:1739.41px;font-size:32px;font-weight:400;color:#303030;transform:translateX(-50%);">13</div>
<div class="t " style="left:2964.6px;top:1739.41px;font-size:32px;font-weight:400;color:#303030;transform:translateX(-50%);">14</div>
<div class="t " style="left:2241.6px;top:1899.41px;font-size:32px;font-weight:400;color:#303030;transform:translateX(-50%);">15</div>
<div class="t " style="left:2362.1px;top:1899.41px;font-size:32px;font-weight:400;color:#303030;transform:translateX(-50%);">16</div>
<div class="t " style="left:2482.6px;top:1899.41px;font-size:32px;font-weight:400;color:#303030;transform:translateX(-50%);">17</div>
<div class="abs" style="left:2543.1px;top:1854.0px;width:120px;height:120px;background:#000;border-radius:50%;"></div>
<div class="t " style="left:2603.1px;top:1899.41px;font-size:32px;font-weight:400;color:#ffffff;transform:translateX(-50%);">18</div>
<div class="t " style="left:2723.6px;top:1899.41px;font-size:32px;font-weight:400;color:#303030;transform:translateX(-50%);">19</div>
<div class="t " style="left:2844.1px;top:1899.41px;font-size:32px;font-weight:400;color:#303030;transform:translateX(-50%);">20</div>
<div class="t " style="left:2964.6px;top:1899.41px;font-size:32px;font-weight:400;color:#cccccc;transform:translateX(-50%);">21</div>
<div class="t " style="left:2241.6px;top:2059.41px;font-size:32px;font-weight:400;color:#303030;transform:translateX(-50%);">22</div>
<div class="t " style="left:2362.1px;top:2059.41px;font-size:32px;font-weight:400;color:#303030;transform:translateX(-50%);">23</div>
<div class="t " style="left:2482.6px;top:2059.41px;font-size:32px;font-weight:400;color:#303030;transform:translateX(-50%);">24</div>
<div class="t " style="left:2603.1px;top:2059.41px;font-size:32px;font-weight:400;color:#303030;transform:translateX(-50%);">25</div>
<div class="t " style="left:2723.6px;top:2059.41px;font-size:32px;font-weight:400;color:#303030;transform:translateX(-50%);">26</div>
<div class="t " style="left:2844.1px;top:2059.41px;font-size:32px;font-weight:400;color:#303030;transform:translateX(-50%);">27</div>
<div class="t " style="left:2964.6px;top:2059.41px;font-size:32px;font-weight:400;color:#cccccc;transform:translateX(-50%);">28</div>
<div class="t " style="left:2241.6px;top:2219.41px;font-size:32px;font-weight:400;color:#303030;transform:translateX(-50%);">29</div>
<div class="t " style="left:2362.1px;top:2219.41px;font-size:32px;font-weight:400;color:#cccccc;transform:translateX(-50%);">30</div>
<div class="t " style="left:2482.6px;top:2219.41px;font-size:32px;font-weight:400;color:#303030;transform:translateX(-50%);">31</div>
<div class="t " style="left:2603.1px;top:2219.41px;font-size:32px;font-weight:400;color:#8a8a8a;transform:translateX(-50%);">1</div>
<div class="t " style="left:2723.6px;top:2219.41px;font-size:32px;font-weight:400;color:#8a8a8a;transform:translateX(-50%);">2</div>
<div class="t " style="left:2844.1px;top:2219.41px;font-size:32px;font-weight:400;color:#8a8a8a;transform:translateX(-50%);">3</div>
<div class="t " style="left:2964.6px;top:2219.41px;font-size:32px;font-weight:400;color:#cccccc;transform:translateX(-50%);">4</div>
<div class="t " style="left:2142.41px;top:2383.60px;font-size:31.18px;font-weight:400;color:#161616;">Choose your preferred time</div>
<div class="abs" style="left:3407px;top:294px;width:8px;height:1625px;background:#8a8a8a;border-radius:4px;"></div>
<svg class="abs" style="left:1512px;top:946px;filter:drop-shadow(0 2px 2px rgba(0,0,0,.3));" width="40" height="44" viewBox="0 0 40 44"><path d="M5 3 L5 30 L11.5 24 L16 34.5 L21 32.5 L16.5 22.5 L25 22.5 Z" fill="#000" stroke="#fff" stroke-width="2" stroke-linejoin="round"/></svg>
</div>
</body></html>
